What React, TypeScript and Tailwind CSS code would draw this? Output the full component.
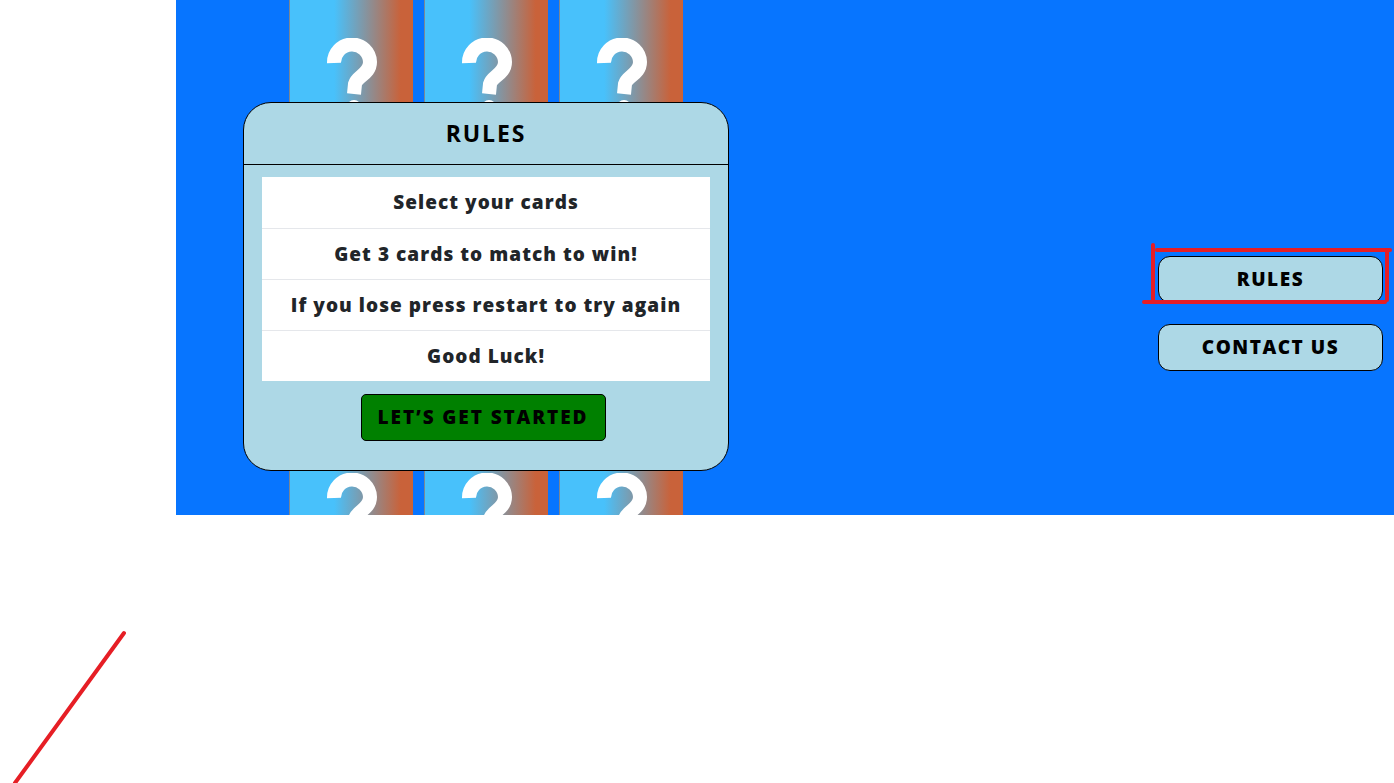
import React from 'react'

const font = { fontFamily: '"Open Sans", Lato, sans-serif' }

function QuestionMark() {
  return (
    <svg width="56" height="80" viewBox="0 0 56 80" aria-hidden>
      <path
        d="M10 25 A18 18 0 0 1 46 24 C46 36 33 38 31 46 L30 56"
        fill="none"
        stroke="white"
        strokeWidth="14"
      />
      <circle cx="30" cy="69" r="7" fill="white" />
    </svg>
  )
}

function Card() {
  return (
    <div className="flex h-[423px] w-[124px] justify-center border-l border-[#7b8794] bg-[linear-gradient(to_right,#48c1fb_36%,#c9623a_90%)] pt-[38px]">
      <QuestionMark />
    </div>
  )
}

const rules = [
  'Select your cards',
  'Get 3 cards to match to win!',
  'If you lose press restart to try again',
  'Good Luck!',
]

function RulesModal() {
  return (
    <div className="absolute left-[67px] top-[102px] flex h-[369px] w-[486px] flex-col rounded-[28px] border border-black bg-[#add8e6]">
      <div className="flex h-[62px] items-center justify-center border-b border-black">
        <h2 className="text-[23px] font-bold tracking-[0.08em] text-black">RULES</h2>
      </div>
      <div className="px-[18px] pt-[12px]">
        <ul className="bg-white">
          {rules.map((r, i) => (
            <li
              key={r}
              className={`flex h-[51px] items-center justify-center text-[19px] font-extrabold tracking-[0.055em] text-[#212529] ${
                i > 0 ? 'border-t border-[#e5e7eb]' : ''
              }`}
            >
              {r}
            </li>
          ))}
        </ul>
      </div>
      <div className="flex justify-center pr-[6px] pt-[13px]">
        <button className="h-[47px] w-[245px] rounded-[5px] border border-black bg-[#008000] text-[19px] font-extrabold tracking-[0.1em] text-black">
          LET’S GET STARTED
        </button>
      </div>
    </div>
  )
}

export default function App() {
  return (
    <div className="relative h-[783px] w-full overflow-hidden bg-white" style={font}>
      <div className="flex">
        <div className="w-[176px] shrink-0" />
        <main className="relative flex h-[515px] flex-1 overflow-hidden bg-[#0775ff]">
          <div className="flex-1 pl-[113px]">
            <div className="grid grid-cols-[repeat(3,124px)] gap-x-[11px] gap-y-[12px]">
              {Array.from({ length: 6 }).map((_, i) => (
                <Card key={i} />
              ))}
            </div>
          </div>
          <RulesModal />
          <aside className="flex w-[236px] flex-col gap-[21px] pr-[11px] pt-[256px]">
            <button className="h-[47px] w-[225px] rounded-[12px] border border-black bg-[#add8e6] text-[19px] font-extrabold tracking-[0.08em] text-black">
              RULES
            </button>
            <button className="h-[47px] w-[225px] rounded-[12px] border border-black bg-[#add8e6] text-[19px] font-extrabold tracking-[0.08em] text-black">
              CONTACT US
            </button>
          </aside>
        </main>
      </div>

      {/* red markup drawn over the screenshot */}
      <svg className="pointer-events-none absolute inset-0" width="1394" height="783" aria-hidden>
        <g stroke="#e61e25" strokeWidth="4" strokeLinecap="round" fill="none">
          <line x1="1153" y1="245" x2="1153" y2="300" />
          <line x1="1157" y1="250" x2="1390" y2="250" />
          <line x1="1387" y1="250" x2="1387" y2="300" />
          <line x1="1144" y1="302" x2="1385" y2="302" />
          <line x1="124" y1="633" x2="15" y2="783" />
        </g>
      </svg>
    </div>
  )
}
